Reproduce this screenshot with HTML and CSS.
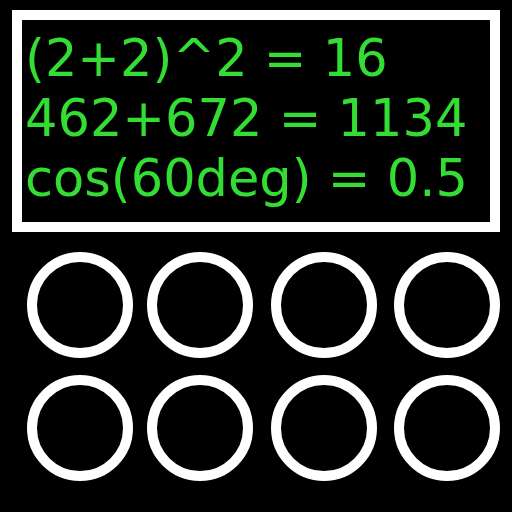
FILE: index.html
```html
<!DOCTYPE html>
<html>
<head>
<meta charset="utf-8">
<link rel="stylesheet" href="styles.css">
</head>
<body>
<div class="display">
  <div class="line">(2+2)^2 = 16</div>
  <div class="line">462+672 = 1134</div>
  <div class="line">cos(60deg) = 0.5</div>
</div>
<div class="pad">
  <div class="row">
    <div class="ring c1"></div>
    <div class="ring c2"></div>
    <div class="ring c3"></div>
    <div class="ring c4"></div>
  </div>
  <div class="row">
    <div class="ring c1"></div>
    <div class="ring c2"></div>
    <div class="ring c3"></div>
    <div class="ring c4"></div>
  </div>
</div>
</body>
</html>
```
FILE: styles.css
```css
html, body {
  margin: 0;
  padding: 0;
  background: #000;
  width: 512px;
  height: 512px;
  overflow: hidden;
}
.display {
  box-sizing: border-box;
  margin: 10px 12px 0 12px;
  width: 488px;
  height: 222px;
  border: 10px solid #fff;
  padding: 9px 3px 0 3px;
  background: #000;
}
.line {
  font-family: "DejaVu Sans", sans-serif;
  font-size: 51px;
  line-height: 60px;
  color: #33dd33;
  white-space: pre;
}
.pad {
  display: flex;
  flex-direction: column;
  gap: 17px;
  padding: 20px 0 0 27px;
}
.row {
  display: flex;
}
.ring {
  box-sizing: border-box;
  width: 106px;
  height: 106px;
  border: 10px solid #fff;
  border-radius: 50%;
}
.c2 { margin-left: 14px; }
.c3 { margin-left: 18px; }
.c4 { margin-left: 17px; }
```
